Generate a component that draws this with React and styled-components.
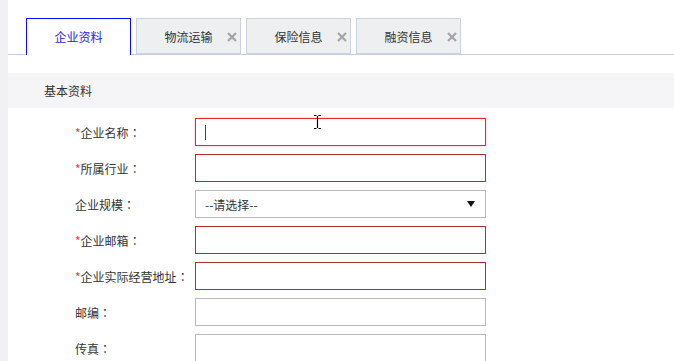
import React from "react";
import styled, { createGlobalStyle } from "styled-components";

const Global = createGlobalStyle`
  html, body { margin: 0; padding: 0; background: #fff; }
  body { font-family: "Noto Sans CJK SC", "Noto Sans", sans-serif; font-size: 12px; color: #333; }
`;

const Page = styled.div`
  display: flex;
  height: 361px;
  overflow: hidden;
`;

const SideStrip = styled.div`
  width: 8px;
  flex: none;
  background: #f1f1f3;
`;

const Main = styled.div`
  flex: 1;
  display: flex;
  flex-direction: column;
  background: #fff;
  position: relative;
`;

const TabBar = styled.div`
  display: flex;
  align-items: flex-start;
  gap: 5px;
  padding: 18px 0 0 18px;
  height: 36px;
  flex: none;
  border-bottom: 1px solid #c6d1de;
`;

const Tab = styled.div`
  position: relative;
  width: 105px;
  box-sizing: border-box;
  display: flex;
  align-items: center;
  justify-content: center;
  font-size: 12px;
  border: 1px solid ${(p) => (p.$active ? "#0a0aff" : "#c9d3df")};
  border-bottom: ${(p) => (p.$active ? "none" : "1px solid #c9d3df")};
  background: ${(p) => (p.$active ? "#fff" : "#eeeff1")};
  color: ${(p) => (p.$active ? "#2222ee" : "#333")};
  height: ${(p) => (p.$active ? "37px" : "36px")};
  padding-bottom: ${(p) => (p.$active ? "1px" : "0")};
  position: relative;
  z-index: ${(p) => (p.$active ? 1 : 0)};
`;

const Close = styled.svg`
  position: absolute;
  right: 3px;
  top: 13px;
`;

const SectionHead = styled.div`
  margin-top: 18px;
  height: 35px;
  flex: none;
  background: #f5f5f7;
  display: flex;
  align-items: center;
  padding-left: 36px;
  font-size: 12px;
  color: #333;
`;

const Form = styled.div`
  display: flex;
  flex-direction: column;
  gap: 8px;
  padding: 10px 0 0 67px;
`;

const Row = styled.div`
  display: flex;
  align-items: center;
  height: 28px;
  flex: none;
`;

const Label = styled.div`
  width: 120px;
  flex: none;
  font-size: 12px;
  color: #333;
  white-space: nowrap;
`;

const Star = styled.span`
  color: #e83a3a;
`;

const Colon = styled.span`
  font-family: "Noto Sans CJK TC", "Noto Sans CJK SC", sans-serif;
`;

const Input = styled.div`
  width: 291px;
  height: 28px;
  box-sizing: border-box;
  border: 1px solid ${(p) => p.$border};
  box-shadow: ${(p) => (p.$focus ? "0 0 2px rgba(255,120,160,0.6)" : "none")};
  background: #fff;
  display: flex;
  align-items: center;
  padding: 0 10px 0 9px;
`;

const Caret = styled.span`
  width: 1px;
  height: 15px;
  background: #444;
`;

const SelectText = styled.span`
  flex: 1;
  font-size: 12px;
  color: #333;
`;

const Arrow = styled.span`
  width: 0;
  height: 0;
  border-left: 4px solid transparent;
  border-right: 4px solid transparent;
  border-top: 6px solid #111;
`;

const Pointer = styled.svg`
  position: absolute;
  left: 305px;
  top: 114px;
`;

const rows = [
  { label: "企业名称", req: true, border: "#e8262c", focus: true },
  { label: "所属行业", req: true, border: "#a83232" },
  { label: "企业规模", select: true, border: "#b8b8c4" },
  { label: "企业邮箱", req: true, border: "#a83232" },
  { label: "企业实际经营地址", req: true, border: "#a83232" },
  { label: "邮编", border: "#b8b8c4" },
  { label: "传真", border: "#b8b8c4" },
];

const X = () => (
  <Close width="10" height="10" viewBox="0 0 10 10">
    <path d="M1 1L9 9M9 1L1 9" stroke="#a4a4a4" strokeWidth="2.2" />
  </Close>
);

export default function App() {
  return (
    <>
      <Global />
      <Page>
        <SideStrip />
        <Main>
          <TabBar>
            <Tab $active>企业资料</Tab>
            <Tab>物流运输<X /></Tab>
            <Tab>保险信息<X /></Tab>
            <Tab>融资信息<X /></Tab>
          </TabBar>
          <SectionHead>基本资料</SectionHead>
          <Form>
            {rows.map((r) => (
              <Row key={r.label}>
                <Label>
                  {r.req && <Star>*</Star>}
                  {r.label}
                  <Colon>：</Colon>
                </Label>
                <Input $border={r.border} $focus={r.focus}>
                  {r.focus && <Caret />}
                  {r.select && (
                    <>
                      <SelectText>--请选择--</SelectText>
                      <Arrow />
                    </>
                  )}
                </Input>
              </Row>
            ))}
          </Form>
          <Pointer width="9" height="16" viewBox="0 0 9 16">
            <path d="M1 1.5h2.5M5.5 1.5H8M4.5 2v12M1 14.5h2.5M5.5 14.5H8" stroke="#000" strokeWidth="1.2" fill="none" />
          </Pointer>
        </Main>
      </Page>
    </>
  );
}
